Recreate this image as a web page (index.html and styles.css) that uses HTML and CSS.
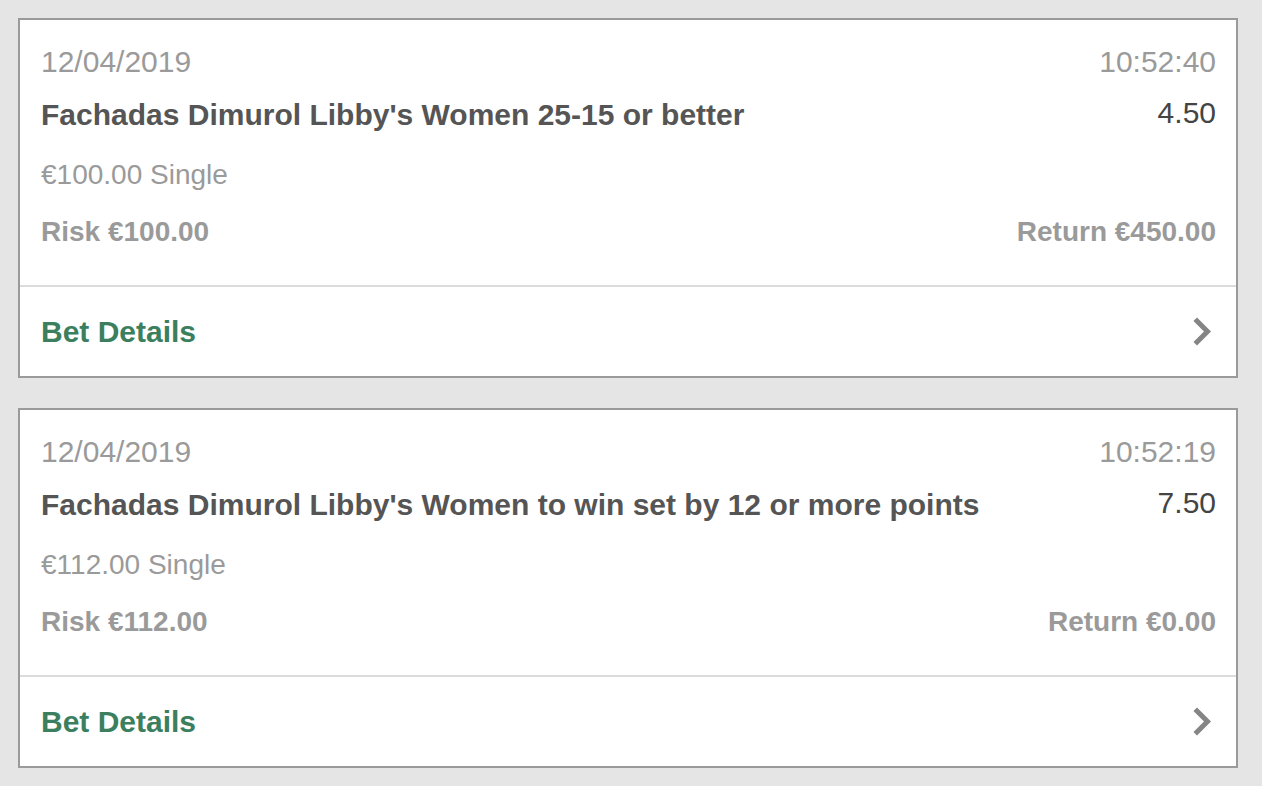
FILE: index.html
```html
<!DOCTYPE html>
<html lang="en">
<head>
<meta charset="utf-8">
<title>Bets</title>
<link rel="stylesheet" href="styles.css">
</head>
<body>
<div class="list">
  <div class="card">
    <div class="info">
      <div class="row meta"><span>12/04/2019</span><span>10:52:40</span></div>
      <div class="row sel"><span class="name">Fachadas Dimurol Libby's Women 25-15 or better</span><span class="odds">4.50</span></div>
      <div class="row stake"><span>€100.00 Single</span></div>
      <div class="row totals"><span>Risk €100.00</span><span>Return €450.00</span></div>
    </div>
    <div class="details">
      <span class="details-label">Bet Details</span>
      <svg class="chev" width="22" height="30" viewBox="0 0 22 30"><polyline points="5,4 15.5,14.5 5,25" fill="none" stroke="#858585" stroke-width="5" stroke-linecap="square" stroke-linejoin="miter"/></svg>
    </div>
  </div>
  <div class="card">
    <div class="info">
      <div class="row meta"><span>12/04/2019</span><span>10:52:19</span></div>
      <div class="row sel"><span class="name">Fachadas Dimurol Libby's Women to win set by 12 or more points</span><span class="odds">7.50</span></div>
      <div class="row stake"><span>€112.00 Single</span></div>
      <div class="row totals"><span>Risk €112.00</span><span>Return €0.00</span></div>
    </div>
    <div class="details">
      <span class="details-label">Bet Details</span>
      <svg class="chev" width="22" height="30" viewBox="0 0 22 30"><polyline points="5,4 15.5,14.5 5,25" fill="none" stroke="#858585" stroke-width="5" stroke-linecap="square" stroke-linejoin="miter"/></svg>
    </div>
  </div>
</div>
</body>
</html>
```

FILE: styles.css
```css
html, body {
  margin: 0;
  padding: 0;
  background: #e5e5e5;
}
body {
  font-family: "Liberation Sans", Arial, Helvetica, sans-serif;
}
.list {
  display: flex;
  flex-direction: column;
  gap: 30px;
  padding: 18px 24px 18px 18px;
}
.card {
  background: #fff;
  border: 2px solid #9a9a9a;
  height: 356px;
  display: flex;
  flex-direction: column;
}
.info {
  padding: 20px 20px 0 21px;
  height: 267px;
  box-sizing: border-box;
  border-bottom: 2px solid #dcdcdc;
}
.row {
  display: flex;
  justify-content: space-between;
  align-items: flex-start;
}
.meta {
  font-size: 30px;
  line-height: 44px;
  color: #9a9a9a;
}
.sel {
  margin-top: 11px;
  line-height: 40px;
  font-size: 30px;
}
.name {
  font-weight: bold;
  color: #555;
}
.odds {
  color: #444;
  margin-top: -2px;
}
.stake {
  margin-top: 20px;
  font-size: 28px;
  line-height: 40px;
  color: #9a9a9a;
}
.totals {
  margin-top: 17px;
  font-size: 28px;
  line-height: 40px;
  font-weight: bold;
  color: #9a9a9a;
}
.details {
  flex: 1;
  display: flex;
  align-items: center;
  justify-content: space-between;
  padding: 0 22px 0 21px;
}
.details-label {
  font-size: 30px;
  font-weight: bold;
  color: #3b7f5e;
}
.chev {
  display: block;
}
```
